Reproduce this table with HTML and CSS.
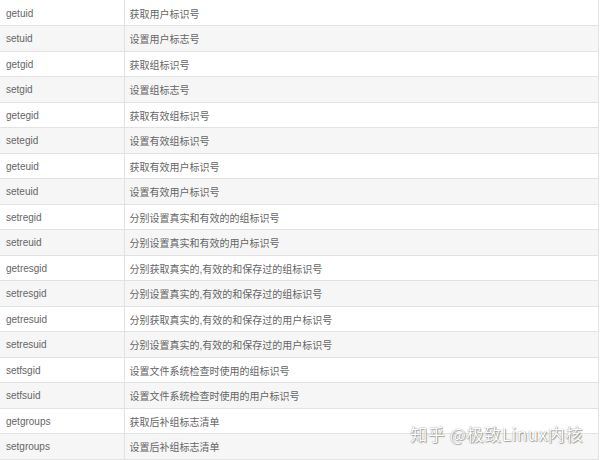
FILE: index.html
```html
<!DOCTYPE html>
<html lang="zh-CN">
  <head>
    <meta charset="UTF-8" />
    <title>用户和组标识函数</title>
    <link rel="stylesheet" href="styles.css">
  </head>
  <body>
    <div class="page">
      <table class="func-table">
        <tbody>
          <tr><td class="name">getuid</td><td class="desc">获取用户标识号</td></tr>
          <tr><td class="name">setuid</td><td class="desc">设置用户标志号</td></tr>
          <tr><td class="name">getgid</td><td class="desc">获取组标识号</td></tr>
          <tr><td class="name">setgid</td><td class="desc">设置组标志号</td></tr>
          <tr><td class="name">getegid</td><td class="desc">获取有效组标识号</td></tr>
          <tr><td class="name">setegid</td><td class="desc">设置有效组标识号</td></tr>
          <tr><td class="name">geteuid</td><td class="desc">获取有效用户标识号</td></tr>
          <tr><td class="name">seteuid</td><td class="desc">设置有效用户标识号</td></tr>
          <tr><td class="name">setregid</td><td class="desc">分别设置真实和有效的的组标识号</td></tr>
          <tr><td class="name">setreuid</td><td class="desc">分别设置真实和有效的用户标识号</td></tr>
          <tr><td class="name">getresgid</td><td class="desc">分别获取真实的,有效的和保存过的组标识号</td></tr>
          <tr><td class="name">setresgid</td><td class="desc">分别设置真实的,有效的和保存过的组标识号</td></tr>
          <tr><td class="name">getresuid</td><td class="desc">分别获取真实的,有效的和保存过的用户标识号</td></tr>
          <tr><td class="name">setresuid</td><td class="desc">分别设置真实的,有效的和保存过的用户标识号</td></tr>
          <tr><td class="name">setfsgid</td><td class="desc">设置文件系统检查时使用的组标识号</td></tr>
          <tr><td class="name">setfsuid</td><td class="desc">设置文件系统检查时使用的用户标识号</td></tr>
          <tr><td class="name">getgroups</td><td class="desc">获取后补组标志清单</td></tr>
          <tr><td class="name">setgroups</td><td class="desc">设置后补组标志清单</td></tr>
        </tbody>
      </table>

      <!-- 水印 -->
      <div class="watermark">知乎 @极致Linux内核</div>
    </div>
  </body>
</html>
```

FILE: styles.css
```css
* {
  margin: 0;
  padding: 0;
  box-sizing: border-box;
}

body {
  width: 600px;
  height: 460px;
  overflow: hidden;
  background: #ffffff;
  font-family: 'Liberation Sans', 'Noto Sans CJK SC', sans-serif;
  color: #666666;
}

.page {
  position: relative;
  width: 600px;
  height: 460px;
}

.func-table {
  width: 599px;
  border-collapse: collapse;
  table-layout: fixed;
  font-size: 10px;
  border-right: 1px solid #e4e4e4;
}

.func-table tr {
  height: 25.5px;
}

.func-table tr:nth-child(even) {
  background: #f6f6f6;
}

.func-table td {
  border-bottom: 1px solid #e2e2e2;
  vertical-align: middle;
  white-space: nowrap;
  padding: 1px 6px 0;
}

.func-table .name {
  width: 124px;
  border-right: 1px solid #e2e2e2;
}

.func-table .desc {
  padding-left: 5px;
}

.watermark {
  position: absolute;
  right: 17px;
  top: 424px;
  font-family: 'Noto Sans CJK SC', 'Liberation Sans', sans-serif;
  font-size: 17px;
  line-height: 20px;
  letter-spacing: 0.6px;
  color: #ffffff;
  text-shadow: 0 0 1px rgba(0, 0, 0, 0.5), 1px 1px 1px rgba(0, 0, 0, 0.3);
}
```
